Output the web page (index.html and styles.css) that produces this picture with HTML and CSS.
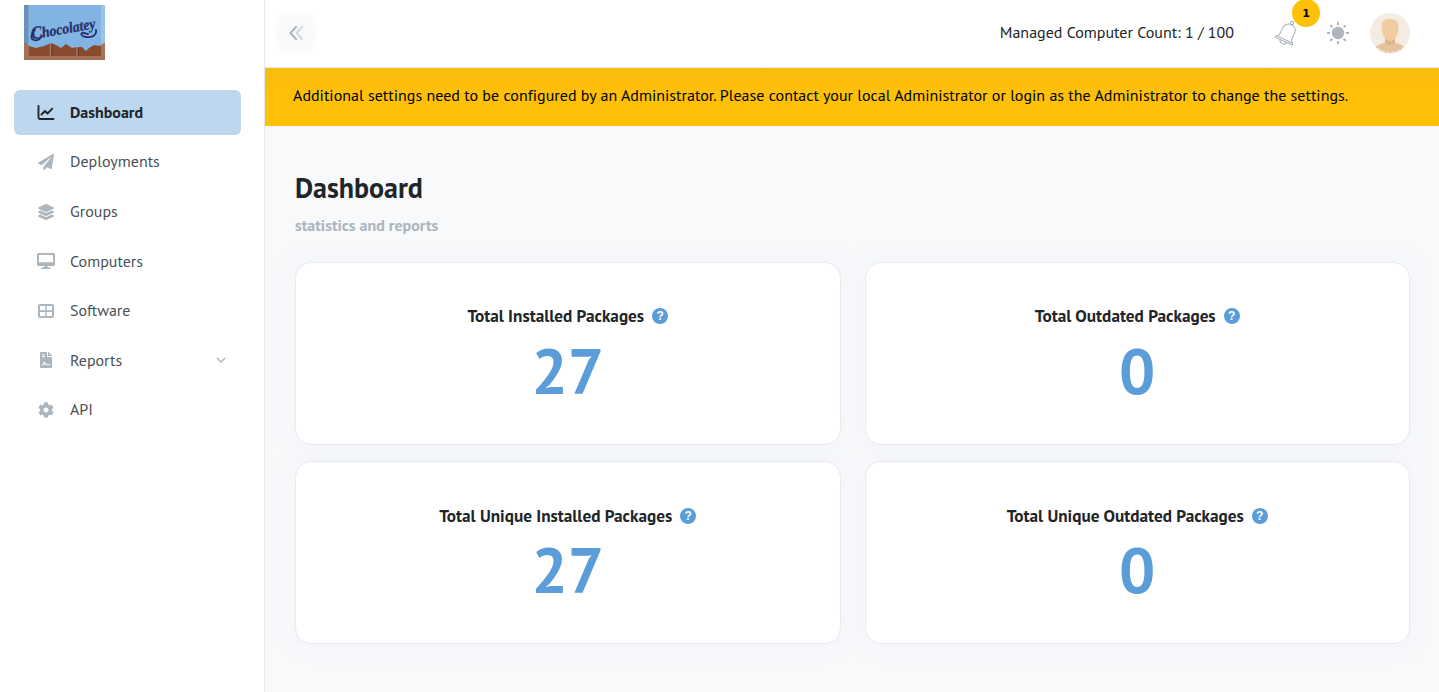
FILE: index.html
```html
<!DOCTYPE html>
<html lang="en">
<head>
<meta charset="utf-8">
<title>Dashboard</title>
<link rel="stylesheet" href="styles.css">
</head>
<body>
<div class="app">
  <aside class="sidebar">
    <svg class="logo" viewBox="0 0 81 55" width="81" height="55" role="img" aria-label="Chocolatey">
      <rect width="81" height="55" fill="#82b4e3"/>
      <rect width="4.500" height="55" fill="#6b93b8"/>
      <rect x="77" width="4" height="55" fill="#9bc3e9"/>
      <path d="M0 38l5 3 7 2 8-2 7-3 5 2 5 3 5-4 6 4 5-1 5 0 4 4 3-3 5-3 6 1 5-3v17H0z" fill="#894b2d"/>
      <path d="M0 38l5 3v9l-5 5zM81 38l-4 2v11l4 4zM0 55l4-4h73l4 4z" fill="#a57258"/>
      <path d="M26.500 38v14M53 42v10" stroke="#ad7a61" stroke-width="1.500"/>
      <path d="M28 39v12M54.300 43v8" stroke="#673820" stroke-width="1"/>
      <text class="logo-text" x="8" y="34.500" textLength="65" lengthAdjust="spacingAndGlyphs" transform="rotate(-10 8 34.500)"><tspan class="logo-cap">C</tspan>hocolatey</text>
      <path d="M11 25C7 28 6 34 10 35c3 1 6-1 8-4M72 25c1 5-4 8-10 7-3-.500-6-2.500-4-4 2-1 4 1 6 1" fill="none" stroke="#27306b" stroke-width="1.800" stroke-linecap="round"/>
    </svg>
    <nav class="menu">
      <a class="item active"><svg class="icon" viewBox="0 0 18 18"><path d="M1.500 2v11.500a1.500 1.500 0 0 0 1.500 1.500H16.500M4.500 10.500l3.500-3.500 2.500 2.500 4.800-4.800" fill="none" stroke="currentColor" stroke-width="1.900" stroke-linecap="round" stroke-linejoin="round"/></svg><span>Dashboard</span></a>
      <a class="item"><svg class="icon" viewBox="0 0 512 512"><path fill="currentColor" d="M476 3.200 12.500 270.600c-18.100 10.400-15.800 35.600 2.200 43.200L121 358.400l287.300-253.200c5.500-4.900 13.300 2.600 8.600 8.300L176 407v80.500c0 23.600 28.500 32.900 42.500 15.800L282 426l124.600 52.200c14.200 6 30.400-2.900 33-18.200l72-432C515 7.800 493.300-6.800 476 3.200z"/></svg><span>Deployments</span></a>
      <a class="item"><svg class="icon" viewBox="0 0 512 512"><path fill="currentColor" d="M12.400 148 244.500 253.300c7.300 3.300 15.600 3.300 22.900 0L499.600 148c16.500-7.500 16.500-32.500 0-40L267.400 2.700c-7.300-3.300-15.600-3.300-22.900 0L12.400 108c-16.500 7.500-16.500 32.500 0 40zm487.200 88.300-57.900-26.300-161 73a60 60 0 0 1-49.400 0L70.300 210l-57.900 26.300c-16.500 7.500-16.500 32.500 0 40l232.100 105.200c7.300 3.300 15.600 3.300 22.900 0l232.200-105.200c16.500-7.500 16.500-32.500 0-40zm0 127.800-57.700-26.100-161.200 73a60 60 0 0 1-49.400 0L70.200 338l-57.800 26.100c-16.500 7.500-16.500 32.500 0 40l232.100 105.200c7.300 3.300 15.600 3.300 22.900 0l232.200-105.200c16.500-7.500 16.500-32.500 0-40z"/></svg><span>Groups</span></a>
      <a class="item"><svg class="icon" viewBox="0 0 576 512"><path fill="currentColor" d="M528 0H48C21.500 0 0 21.500 0 48v320c0 26.500 21.500 48 48 48h192l-16 48h-72c-13.300 0-24 10.700-24 24s10.700 24 24 24h272c13.300 0 24-10.700 24-24s-10.700-24-24-24h-72l-16-48h192c26.500 0 48-21.500 48-48V48c0-26.500-21.500-48-48-48zm-16 296H64V64h448v232z"/></svg><span>Computers</span></a>
      <a class="item"><svg class="icon" viewBox="0 0 512 512"><path fill="currentColor" d="M448 32H64C28.700 32 0 60.700 0 96v320c0 35.300 28.700 64 64 64h384c35.300 0 64-28.700 64-64V96c0-35.300-28.700-64-64-64zM232 96v132H64V96zM64 284h168v132H64zm216 132V284h168v132zm168-188H280V96h168z"/></svg><span>Software</span></a>
      <a class="item"><svg class="icon" viewBox="-64 0 512 512"><path fill="currentColor" fill-rule="evenodd" d="M224 136V0H24C10.700 0 0 10.700 0 24v464c0 13.300 10.700 24 24 24h336c13.300 0 24-10.700 24-24V160H248c-13.200 0-24-10.800-24-24zM64 72h96v28H64zm0 64h96v28H64zm256 288h-72c-20 0-38-10-48-28-4-8-14-6-18 1l-20 18-28-52-17 49c-4 8-12 12-21 12H64v-32h25l24-65c8-22 38-22 46 0l16 44c20-12 46-4 56 15 4 6 8 6 17 6h72zm57-319L279 7c-4.500-4.500-10.600-7-17-7h-6v128h128v-6c0-6.300-2.500-12.400-7-17z"/></svg><span>Reports</span><svg class="chevron" viewBox="0 0 10 10"><path d="M1.200 3.200L5 7l3.800-3.800" fill="none" stroke="currentColor" stroke-width="1.300" stroke-linecap="round"/></svg></a>
      <a class="item"><svg class="icon" viewBox="0 0 512 512"><path fill="currentColor" d="m487.400 315.700-42.600-24.600c4.300-23.200 4.300-47 0-70.200l42.600-24.600c4.900-2.800 7.100-8.600 5.500-14-11.100-35.600-30-67.800-54.700-94.600-3.800-4.100-10-5.100-14.800-2.300L380.800 110c-17.900-15.400-38.500-27.300-60.800-35.100V25.800c0-5.600-3.900-10.500-9.400-11.700-36.700-8.200-74.300-7.800-109.200 0-5.500 1.200-9.400 6.100-9.400 11.700V75c-22.200 7.900-42.800 19.800-60.800 35.100L88.700 85.500c-4.900-2.800-11-1.900-14.800 2.300-24.700 26.700-43.600 58.900-54.700 94.600-1.700 5.400.6 11.200 5.500 14L67.300 221c-4.300 23.200-4.300 47 0 70.200l-42.600 24.600c-4.900 2.800-7.100 8.600-5.500 14 11.100 35.600 30 67.800 54.700 94.600 3.800 4.100 10 5.100 14.800 2.300l42.600-24.600c17.900 15.400 38.500 27.300 60.800 35.100v49.200c0 5.600 3.900 10.500 9.400 11.700 36.700 8.200 74.300 7.800 109.200 0 5.500-1.200 9.400-6.100 9.400-11.700v-49.200c22.200-7.900 42.800-19.800 60.800-35.100l42.600 24.600c4.900 2.800 11 1.900 14.800-2.300 24.700-26.700 43.600-58.900 54.700-94.600 1.500-5.500-.7-11.300-5.600-14.100zM256 336c-44.100 0-80-35.900-80-80s35.900-80 80-80 80 35.900 80 80-35.900 80-80 80z"/></svg><span>API</span></a>
    </nav>
  </aside>
  <div class="content">
    <header class="topbar">
      <button class="collapse" aria-label="Collapse menu"><svg viewBox="0 0 14 14" width="14" height="14" fill="none" stroke-width="2" stroke-linecap="round" stroke-linejoin="round"><path d="M13 1L7.500 7 13 13" stroke="#d5d9de"/><path d="M7 1L1.500 7 7 13" stroke="#adb5bd"/></svg></button>
      <span class="count">Managed Computer Count: 1 / 100</span>
      <span class="bell">
        <svg viewBox="0 0 24 26" width="24" height="26" fill="none" stroke="#a7b0b9" stroke-width="1"><g transform="rotate(24 12 13)"><circle cx="12.500" cy="1.800" r="1.600"/><path d="M5.800 17.500V11C5.800 6.500 8.500 3.600 12.500 3.600s6.500 2.900 6.500 7.400v6.500c.300 1.500 2.800 2 2.800 4.300H2.500c0-2.300 3-2.800 3.300-4.300zM3.500 19.900h17.500M8.500 21.800c0 3.800 7 3.800 7 0"/></g></svg>
        <span class="badge">1</span>
      </span>
      <svg class="sun" viewBox="0 0 24 24" width="24" height="24"><circle cx="12" cy="12" r="6.200" fill="#adb5bd"/><path d="M12 1.800v1.500M12 20.700v1.500M1.800 12h1.500M20.700 12h1.500M4.800 4.800l1 1M18.200 18.200l1 1M4.800 19.200l1-1M18.200 5.800l1-1" stroke="#adb5bd" stroke-width="2" stroke-linecap="round"/></svg>
      <svg class="avatar" viewBox="0 0 40 40" width="40" height="40"><defs><clipPath id="face"><circle cx="20" cy="20" r="20"/></clipPath></defs><g clip-path="url(#face)"><rect width="40" height="40" fill="#f3ece3"/><path d="M2 40c1-6 6-8 12-10l2-1h8l2 1c6 2 11 4 12 10z" fill="#e6c19c"/><path d="M15 25v4c2 3.500 8 3.500 10 0v-4z" fill="#d9b48c"/><path d="M11.500 13C11.500 8 14 6 20 6s8.500 2 8.500 7c0 8-3 15-8.500 15s-8.500-7-8.500-15z" fill="#f0cca0"/></g><circle cx="20" cy="20" r="19" fill="none" stroke="#f8efdf" stroke-dasharray="3 2"/></svg>
    </header>
    <div class="notice">Additional settings need to be configured by an Administrator. Please contact your local Administrator or login as the Administrator to change the settings.</div>
    <main class="page">
      <h1 class="title">Dashboard</h1>
      <p class="subtitle">statistics and reports</p>
      <section class="cards">
        <article class="card"><h2 class="label"><span>Total Installed Packages</span><i class="help">?</i></h2><div class="value">27</div></article>
        <article class="card"><h2 class="label"><span>Total Outdated Packages</span><i class="help">?</i></h2><div class="value">0</div></article>
        <article class="card unique"><h2 class="label"><span>Total Unique Installed Packages</span><i class="help">?</i></h2><div class="value">27</div></article>
        <article class="card unique"><h2 class="label"><span>Total Unique Outdated Packages</span><i class="help">?</i></h2><div class="value">0</div></article>
      </section>
    </main>
  </div>
</div>
</body>
</html>
```
FILE: styles.css
```css
* { box-sizing: border-box; }
body { margin: 0; font-family: "PT Sans", "Noto Sans", sans-serif; font-size: 16px; color: #212529; background: #f8f9fb; }
.app { display: flex; height: 692px; overflow: hidden; }
.sidebar { width: 265px; flex: none; background: #fff; border-right: 1px solid #e4e8ed; padding-top: 5px; }
.logo { display: block; margin-left: 24px; overflow: visible; }
.logo-text { font: italic bold 15px "Liberation Serif", serif; fill: #27306b; stroke: #27306b; stroke-width: .3; }
.logo-cap { font-size: 18px; }
.menu { margin: 30px 23px 0 14px; display: flex; flex-direction: column; gap: 4.580px; }
.item { display: flex; align-items: center; height: 45px; padding: 0 15.500px 0 23px; border-radius: 6px; color: #495057; }
.item span { padding-bottom: 1.300px; }
.item.active { background: #bdd7ee; color: #212529; font-weight: 700; }
.icon { width: 18px; height: 16px; margin-right: 15px; color: #adb5bd; flex: none; }
.active .icon { color: #212529; height: 18px; }
.chevron { width: 10px; height: 10px; margin-left: auto; color: #adb5bd; }
.content { flex: 1; min-width: 0; }
.topbar { height: 68px; background: #fff; border-bottom: 1px solid #e9ecf2; display: flex; align-items: center; padding: 0 29px 1px 14px; }
.collapse { width: 34px; height: 34px; border: 0; border-radius: 8px; background: #f8f9fb; box-shadow: 0 0 5px 2px #f8f9fb; display: grid; place-items: center; padding: 0 1px 0 0; }
.count { margin-left: auto; padding-bottom: 2px; }
.bell { position: relative; width: 24px; height: 26px; margin: 0 27px 0 41px; }
.badge { position: absolute; left: 17px; top: -21px; width: 28px; height: 28px; border-radius: 50%; background: #ffc107; color: #000; font: 700 11px/29px "DejaVu Sans", sans-serif; text-align: center; }
.sun { margin-right: 20px; }
.notice { height: 58px; padding: 0 28px; line-height: 54px; color: #000; background: linear-gradient(#f9bb10, #ffc107 50%); white-space: nowrap; letter-spacing: .015px; }
.page { padding: 41px 29px 0 30px; }
.title { margin: 0; font-size: 28px; line-height: 42px; }
.subtitle { margin: 6px 0 0; font-weight: 700; line-height: 20px; color: #adb5bd; }
.cards { margin-top: 27px; display: grid; grid-template-columns: 1fr 1fr; gap: 16px 24px; }
.card { height: 183px; border: 1px solid #e7ebf0; border-radius: 16px; background: #fff; box-shadow: 0 0 20px rgba(222, 230, 238, .25); padding-top: 41px; text-align: center; }
.card.unique { padding-top: 42px; }
.label { margin: 0; display: flex; justify-content: center; align-items: center; gap: 8px; font-size: 17.200px; line-height: 24px; }
.help { width: 16px; height: 16px; border-radius: 50%; background: #5b9dd9; color: #fff; font: 700 12px/16px "Liberation Sans", sans-serif; }
.value { font-size: 64px; line-height: 80px; margin-top: 3px; font-weight: 700; color: #5b9dd9; }
.unique .value { margin-top: 2px; }
```
